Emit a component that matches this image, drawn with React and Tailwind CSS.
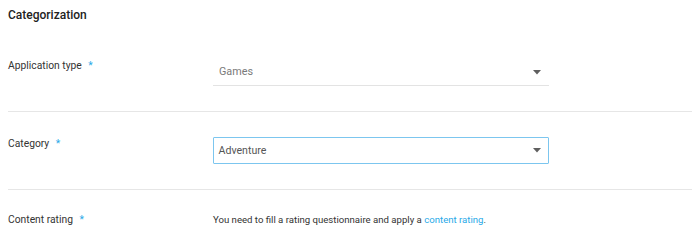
import React from 'react'

function Caret() {
  return (
    <svg width="8" height="5" viewBox="0 0 8 5" className="shrink-0">
      <path d="M0 0 L8 0 L4 4.5 Z" fill="#5f5f5f" />
    </svg>
  )
}

function Label({ children }) {
  return (
    <div className="w-[205px] shrink-0 text-[10.3px] leading-4 text-[#333]">
      {children} <span className="ml-1 text-[#29a9e8]">*</span>
    </div>
  )
}

export default function App() {
  return (
    <div className="w-[700px] h-[239px] bg-white overflow-hidden" style={{ fontFamily: 'Roboto, "Liberation Sans", sans-serif' }}>
      <div className="mx-2">
        <div className="h-[30px] flex items-center text-[12px] font-medium text-[#222]">Categorization</div>

        {/* application type */}
        <div className="flex items-start pt-[28px] pb-[25px] border-b border-[#e6e6e6]">
          <Label>Application type</Label>
          <div className="mt-[1px] w-[336px] h-[27px] flex items-center justify-between pl-[6px] pr-[8px] border-b border-[#e3e3e3]">
            <span className="text-[10.8px] text-[#7a7a7a]">Games</span>
            <Caret />
          </div>
        </div>

        {/* category */}
        <div className="flex items-start pt-[24px] pb-[25px] border-b border-[#e6e6e6]">
          <Label>Category</Label>
          <div className="mt-[1px] w-[336px] h-[27px] flex items-center justify-between pl-[4.5px] pr-[7px] border-[1.5px] border-[#7cc6ef] rounded-[1px]">
            <span className="text-[10.6px] text-[#555]">Adventure</span>
            <Caret />
          </div>
        </div>

        {/* content rating */}
        <div className="flex items-start pt-[22px]">
          <Label>Content rating</Label>
          <div className="text-[9.6px] leading-4 text-[#333]">
            You need to fill a rating questionnaire and apply a{' '}
            <a className="text-[#29a9e8]">content rating</a>.
          </div>
        </div>
      </div>
    </div>
  )
}
